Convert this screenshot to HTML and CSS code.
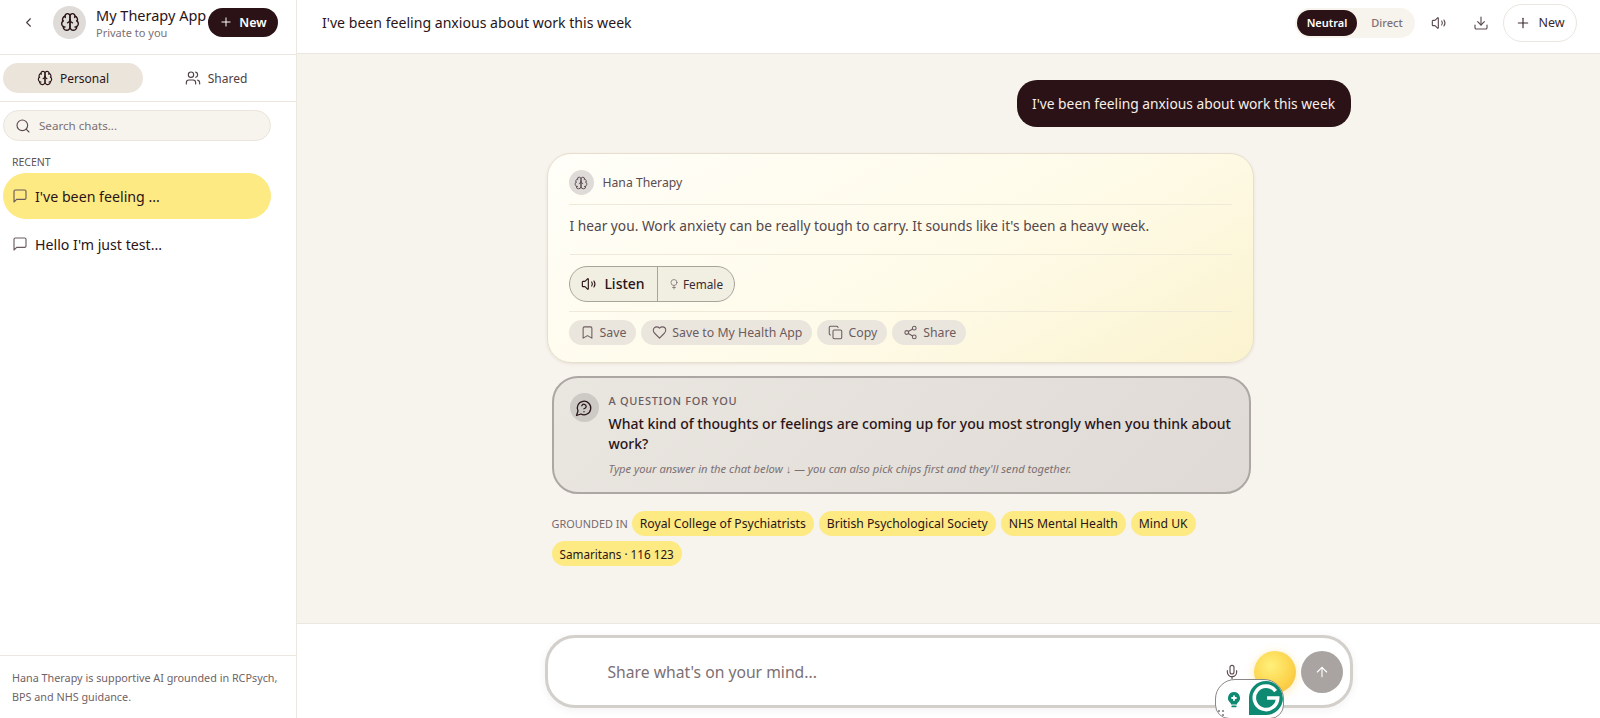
FILE: index.html
```html
<!DOCTYPE html>
<html lang="en">
<head>
<meta charset="utf-8">
<title>My Therapy App</title>
<link rel="stylesheet" href="styles.css">
</head>
<body>
<svg class="defs" aria-hidden="true">
  <symbol id="brain" viewBox="0 0 24 24"><path d="M12 5a3 3 0 1 0-5.997.125 4 4 0 0 0-2.526 5.77 4 4 0 0 0 .556 6.588A4 4 0 1 0 12 18Z"/><path d="M12 5a3 3 0 1 1 5.997.125 4 4 0 0 1 2.526 5.77 4 4 0 0 1-.556 6.588A4 4 0 1 1 12 18Z"/><path d="M15 13a4.5 4.5 0 0 1-3-4 4.5 4.5 0 0 1-3 4"/><path d="M17.599 6.5a3 3 0 0 0 .399-1.375"/><path d="M6.003 5.125A3 3 0 0 0 6.401 6.5"/><path d="M3.477 10.896a4 4 0 0 1 .585-.396"/><path d="M19.938 10.5a4 4 0 0 1 .585.396"/><path d="M6 18a4 4 0 0 1-1.967-.516"/><path d="M19.967 17.484A4 4 0 0 1 18 18"/></symbol>
  <symbol id="vol" viewBox="0 0 24 24"><path d="M11 4.702a.705.705 0 0 0-1.203-.498L6.413 7.587A1.4 1.4 0 0 1 5.416 8H3a1 1 0 0 0-1 1v6a1 1 0 0 0 1 1h2.416a1.4 1.4 0 0 1 .997.413l3.383 3.384A.705.705 0 0 0 11 19.298z"/><path d="M16 9a5 5 0 0 1 0 6"/><path d="M19.4 7.5a8 8 0 0 1 0 9"/></symbol>
  <symbol id="msg" viewBox="0 0 24 24"><path d="M21 15a2 2 0 0 1-2 2H7l-4 4V5a2 2 0 0 1 2-2h14a2 2 0 0 1 2 2z"/></symbol>
  <symbol id="plus" viewBox="0 0 24 24"><path d="M5 12h14"/><path d="M12 5v14"/></symbol>
</svg>
<div class="app">
  <aside class="sidebar">
    <div class="side-head">
      <svg class="ico back" viewBox="0 0 24 24"><path d="m15 18-6-6 6-6"/></svg>
      <span class="avatar"><svg class="ico i20"><use href="#brain"/></svg></span>
      <div class="brand">
        <div class="brand-name">My Therapy App</div>
        <div class="brand-sub">Private to you</div>
      </div>
      <button class="new-dark"><svg class="ico i14"><use href="#plus"/></svg>New</button>
    </div>
    <div class="tabs">
      <div class="tab active"><svg class="ico i16"><use href="#brain"/></svg>Personal</div>
      <div class="tab"><svg class="ico i16" viewBox="0 0 24 24"><path d="M16 21v-2a4 4 0 0 0-4-4H6a4 4 0 0 0-4 4v2"/><path d="M16 3.128a4 4 0 0 1 0 7.744"/><path d="M22 21v-2a4 4 0 0 0-3-3.87"/><circle cx="9" cy="7" r="4"/></svg>Shared</div>
    </div>
    <div class="search">
      <svg class="ico i16" viewBox="0 0 24 24"><path d="m21 21-4.34-4.34"/><circle cx="11" cy="11" r="8"/></svg>
      <span>Search chats...</span>
    </div>
    <div class="recent-label">RECENT</div>
    <div class="chat active"><svg class="ico i16"><use href="#msg"/></svg>I've been feeling ...</div>
    <div class="chat second"><svg class="ico i16"><use href="#msg"/></svg>Hello I'm just test...</div>
    <div class="side-foot">Hana Therapy is supportive AI grounded in RCPsych, BPS and NHS guidance.</div>
  </aside>
  <main class="main">
    <header class="topbar">
      <h1 class="title">I've been feeling anxious about work this week</h1>
      <div class="mode"><span class="mode-on">Neutral</span><span class="mode-off">Direct</span></div>
      <svg class="ico i16 top-ico"><use href="#vol"/></svg>
      <svg class="ico i16 top-ico" viewBox="0 0 24 24"><path d="M12 15V3"/><path d="M21 15v4a2 2 0 0 1-2 2H5a2 2 0 0 1-2-2v-4"/><path d="m7 10 5 5 5-5"/></svg>
      <button class="new-light"><svg class="ico i16"><use href="#plus"/></svg>New</button>
    </header>
    <section class="thread">
      <div class="column">
        <div class="user-row"><div class="user-bubble">I've been feeling anxious about work this week</div></div>
        <article class="card">
          <div class="card-head"><span class="mini-av"><svg class="ico i14"><use href="#brain"/></svg></span>Hana Therapy</div>
          <p class="reply">I hear you. Work anxiety can be really tough to carry. It sounds like it's been a heavy week.</p>
          <div class="voice-row">
            <div class="voice">
              <span class="listen"><svg class="ico i16"><use href="#vol"/></svg>Listen</span>
              <span class="gender"><svg class="ico i12" viewBox="0 0 24 24"><path d="M12 15v7"/><path d="M9 19h6"/><circle cx="12" cy="9" r="6"/></svg>Female</span>
            </div>
          </div>
          <div class="actions">
            <span class="act"><svg class="ico i15" viewBox="0 0 24 24"><path d="m19 21-7-4-7 4V5a2 2 0 0 1 2-2h10a2 2 0 0 1 2 2v16z"/></svg>Save</span>
            <span class="act"><svg class="ico i15" viewBox="0 0 24 24"><path d="M19 14c1.49-1.46 3-3.21 3-5.5A5.5 5.5 0 0 0 16.5 3c-1.76 0-3 .5-4.5 2-1.5-1.5-2.74-2-4.500-2A5.5 5.5 0 0 0 2 8.500c0 2.300 1.500 4.050 3 5.500l7 7Z"/></svg>Save to My Health App</span>
            <span class="act"><svg class="ico i15" viewBox="0 0 24 24"><rect width="14" height="14" x="8" y="8" rx="2"/><path d="M4 16c-1.1 0-2-.9-2-2V4c0-1.1.9-2 2-2h10c1.1 0 2 .9 2 2"/></svg>Copy</span>
            <span class="act"><svg class="ico i15" viewBox="0 0 24 24"><circle cx="18" cy="5" r="3"/><circle cx="6" cy="12" r="3"/><circle cx="18" cy="19" r="3"/><path d="m8.59 13.51 6.83 3.98"/><path d="m15.41 6.51-6.82 3.98"/></svg>Share</span>
          </div>
        </article>
        <article class="question">
          <span class="q-av"><svg class="ico i18" viewBox="0 0 24 24"><path d="M7.9 20A9 9 0 1 0 4 16.1L2 22Z"/><path d="M9.09 9a3 3 0 0 1 5.83 1c0 2-3 3-3 3"/><path d="M12 17h.01"/></svg></span>
          <div class="q-body">
            <div class="q-label">A QUESTION FOR YOU</div>
            <div class="q-text">What kind of thoughts or feelings are coming up for you most strongly when you think about work?</div>
            <div class="q-hint">Type your answer in the chat below ↓ — you can also pick chips first and they'll send together.</div>
          </div>
        </article>
        <div class="sources">
          <span class="src-label">GROUNDED IN</span>
          <span class="chip">Royal College of Psychiatrists</span>
          <span class="chip">British Psychological Society</span>
          <span class="chip">NHS Mental Health</span>
          <span class="chip">Mind UK</span>
          <span class="chip chip-sm">Samaritans · 116 123</span>
        </div>
      </div>
    </section>
    <footer class="composer">
      <div class="inputbox">
        <span class="placeholder">Share what's on your mind...</span>
        <svg class="ico i16 mic" viewBox="0 0 24 24"><path d="M12 19v3"/><path d="M19 10v2a7 7 0 0 1-14 0v-2"/><rect x="9" y="2" width="6" height="13" rx="3"/></svg>
        <span class="orb"></span>
        <span class="send"><svg class="ico i16" viewBox="0 0 24 24"><path d="m5 12 7-7 7 7"/><path d="M12 19V5"/></svg></span>
        <div class="gram">
          <span class="gram-grip"></span>
          <svg class="gram-bulb" viewBox="0 0 24 24"><path d="M12 2a8 8 0 0 0-5 14.2c.8.7 1 1.3 1 2.3h8c0-1 .2-1.6 1-2.3A8 8 0 0 0 12 2z"/><rect x="8.500" y="20" width="7" height="2.400" rx="1.200"/><path class="gram-plus" d="M12 6.500v7M8.500 10h7"/></svg>
          <span class="gram-g"><svg viewBox="0 0 32 32"><path d="M25 9.500A11 11 0 1 0 27 16H17"/></svg></span>
        </div>
      </div>
    </footer>
  </main>
</div>
</body>
</html>
```
FILE: styles.css
```css
* { box-sizing: border-box; }
html, body { margin: 0; height: 100%; }
body {
  font-family: "Noto Sans", "Open Sans", sans-serif;
  color: #2a1418;
  background: #fff;
  overflow: hidden;
}
.defs { display: none; }
.ico { fill: none; stroke: currentColor; stroke-width: 1.7; stroke-linecap: round; stroke-linejoin: round; flex: none; }
.i12 { width: 12px; height: 12px; }
.i14 { width: 14px; height: 14px; }
.i15 { width: 15px; height: 15px; }
.i16 { width: 16px; height: 16px; }
.i18 { width: 18px; height: 18px; }
.i20 { width: 20px; height: 20px; }
.app { display: flex; height: 718px; }

/* sidebar */
.sidebar { width: 297px; flex: none; display: flex; flex-direction: column; border-right: 1px solid #ece7e0; background: #fff; }
.side-head { height: 55px; flex: none; display: flex; align-items: center; padding: 0 0 10px 21px; border-bottom: 1px solid #ece6de; }
.back { width: 15px; height: 15px; color: #4a3a3c; margin-right: 17px; }
.avatar { width: 33px; height: 33px; border-radius: 50%; background: #dedbd9; display: flex; align-items: center; justify-content: center; margin-right: 10px; flex: none; }
.brand { width: 112px; flex: none; white-space: nowrap; }
.brand-name { font-size: 14.500px; line-height: 20px; color: #2a1418; }
.brand-sub { font-size: 11px; line-height: 15px; color: #7c7073; }
.new-dark { width: 70px; height: 29px; border: 0; border-radius: 15px; background: #2a1216; color: #fff; font: 600 12.500px "Noto Sans", sans-serif; display: flex; align-items: center; justify-content: center; gap: 6px; padding: 0; flex: none; }
.tabs { height: 47px; flex: none; display: flex; padding: 8px 3px 0; gap: 3px; border-bottom: 1px solid #ece6de; }
.tab { width: 140px; height: 30px; border-radius: 15px; display: flex; align-items: center; justify-content: center; gap: 7px; font-size: 12px; color: #4e4043; }
.tab.active { background: #ebe4db; color: #2a1418; }
.search { height: 31px; width: 268px; margin: 8px 0 0 3px; border: 1px solid #ebe4dc; border-radius: 16px; background: #f7f3ed; display: flex; align-items: center; gap: 8px; padding-left: 11px; font-size: 11.600px; color: #7c7073; flex: none; }
.search .ico { color: #5b4b4e; }
.recent-label { font-size: 10.500px; line-height: 14px; color: #5f5255; margin: 14px 0 0 12px; }
.chat { width: 268px; height: 46px; margin-left: 3px; border-radius: 23px; display: flex; align-items: center; gap: 7px; padding-left: 9px; font-size: 14.200px; color: #2a1418; flex: none; }
.chat .ico { color: #6a5b5e; }
.chat.active { background: #fdea83; margin-top: 4px; }
.chat.second { margin-top: 2px; }
.side-foot { margin-top: auto; border-top: 1px solid #ece7e0; height: 63px; padding: 12px 12px 0; font-size: 10.800px; line-height: 19px; color: #6f6366; }

/* main */
.main { flex: 1; min-width: 0; display: flex; flex-direction: column; background: #f7f3ed; }
.topbar { height: 54px; flex: none; background: #fff; border-bottom: 1px solid #ebe6df; display: flex; align-items: center; padding: 0 23px 8px 25px; }
.title { flex: 1; margin: 0; font-size: 14.100px; font-weight: 400; color: #2a1418; }
.mode { display: flex; height: 30px; width: 120px; padding: 2px; border-radius: 15px; background: #f7f3ed; font-size: 11px; align-items: center; }
.mode-on { width: 60px; height: 26px; border-radius: 13px; background: #2a1216; color: #fff; font-weight: 600; display: flex; align-items: center; justify-content: center; }
.mode-off { flex: 1; text-align: center; color: #7c7073; font-weight: 500; padding-left: 4px; }
.top-ico { color: #5b4b4e; margin-left: 16px; margin-right: 10px; }
.new-light { width: 74px; height: 38px; border: 1px solid #ebe6df; border-radius: 19px; background: #fff; color: #3a2a2d; font: 400 12.500px "Noto Sans", sans-serif; display: flex; align-items: center; justify-content: center; gap: 7px; padding: 0; margin-left: 4px; }
.thread { flex: 1; min-height: 0; padding-top: 26px; }
.column { width: 806px; margin: 0 auto; }
.user-row { display: flex; justify-content: flex-end; padding-right: 1px; }
.user-bubble { height: 47px; width: 334px; border-radius: 20px; background: #2a1216; color: #f8efe8; font-size: 13.800px; display: flex; align-items: center; justify-content: center; }
.card { width: 707px; height: 210px; margin: 26px 0 0 1px; padding: 16px 21px 0; border: 1px solid #e6dfcd; border-radius: 24px; background: linear-gradient(150deg, #fffef8 0%, #fefbe9 55%, #fbf3cf 100%); box-shadow: 0 1px 3px rgba(120, 100, 60, .12); }
.card-head { display: flex; align-items: center; gap: 9px; font-size: 12.200px; color: #5a4c4f; border-bottom: 1px solid #eee9d8; padding-bottom: 9px; height: 35px; }
.mini-av { width: 25px; height: 25px; border-radius: 50%; background: #dedbd9; display: flex; align-items: center; justify-content: center; }
.reply { margin: 0 0 0 1px; height: 50px; font-size: 13.730px; line-height: 42px; color: #54464a; border-bottom: 1px solid #eee9d8; }
.voice-row { height: 57px; display: flex; align-items: center; border-bottom: 1px solid #eee9d8; padding-top: 1px; }
.voice { display: flex; height: 36px; border: 1px solid #a8a49a; border-radius: 18px; background: #f1eee2; }
.listen { width: 88px; display: flex; align-items: center; justify-content: center; gap: 7px; font-size: 14px; color: #2a1418; border-right: 1px solid #a8a49a; font-weight: 500; }
.gender { width: 76px; display: flex; align-items: center; justify-content: center; gap: 3px; font-size: 11.800px; color: #3a2a2d; }
.gender .ico { stroke-width: 1.3; color: #6b5c5f; }
.actions { display: flex; gap: 5px; padding-top: 8px; }
.act { height: 25px; padding: 0 10px 0 11px; border-radius: 13px; background: #ebe6dd; display: flex; align-items: center; gap: 5px; font-size: 12.300px; color: #6b5c5f; }
.question { width: 699px; height: 118px; margin: 13px 0 0 6px; padding: 15px 16px; border: 2px solid #aca7a3; border-radius: 26px; background: linear-gradient(135deg, #eae6e0, #dfdad5); display: flex; gap: 10px; }
.q-av { width: 29px; height: 29px; border-radius: 50%; background: #cdc9c5; display: flex; align-items: center; justify-content: center; flex: none; }
.q-label { font-size: 11px; line-height: 16px; letter-spacing: .7px; color: #6b5c5f; font-weight: 500; }
.q-text { font-size: 14px; line-height: 19.500px; font-weight: 500; color: #2a1418; margin-top: 5px; }
.q-hint { font-size: 11.200px; line-height: 16px; font-style: italic; color: #7c7073; margin-top: 8px; }
.sources { width: 707px; margin: 17px 0 0 6px; display: flex; flex-wrap: wrap; align-items: center; gap: 5px; }
.src-label { font-size: 10.900px; color: #756a6c; margin-right: -1px; }
.chip { height: 25px; padding: 0 8px; border-radius: 13px; background: #fdea83; font-size: 12.200px; display: flex; align-items: center; color: #2a1418; }
.chip-sm { font-size: 11.700px; }

/* composer */
.composer { height: 95px; flex: none; background: #fff; border-top: 1px solid #ece7e0; padding-top: 11px; }
.inputbox { position: relative; width: 808px; height: 73px; margin: 0 auto; border: 3px solid #d3cfca; border-radius: 30px; background: #fff; display: flex; align-items: center; padding: 0 7px 0 60px; box-shadow: 0 2px 10px rgba(60, 40, 30, .06); }
.placeholder { flex: 1; font-size: 15.700px; color: #7c7073; }
.mic { color: #5b4b4e; margin-right: 14px; }
.orb { width: 42px; height: 42px; border-radius: 50%; background: radial-gradient(circle at 40% 35%, #fff07a, #fcd24a 60%, #f2b63a); box-shadow: 0 2px 10px rgba(250, 200, 60, .4); margin-right: 5px; }
.send { width: 42px; height: 42px; border-radius: 50%; background: #a9a3a2; color: #fff; display: flex; align-items: center; justify-content: center; }
.gram { position: absolute; left: 667px; top: 41px; width: 69px; height: 40px; border: 1.500px solid #8a8785; border-radius: 20px 20px 14px 14px; background: #fff; display: flex; align-items: flex-start; padding: 9px 0 0 9px; overflow: hidden; }
.gram-grip { position: absolute; left: 1px; bottom: 1px; width: 8px; height: 8px; background: radial-gradient(circle, #9a9896 1px, transparent 1.200px) 0 0 / 4px 4px; }
.gram-bulb { width: 18px; height: 21px; fill: #0f8a72; stroke: none; flex: none; }
.gram-plus { fill: none; stroke: #fff; stroke-width: 2.400; }
.gram-g { position: absolute; right: 0; top: 1px; width: 34px; height: 34px; background: #0f8a72; border-radius: 50% 50% 50% 0; }
.gram-g svg { display: block; width: 34px; height: 34px; fill: none; stroke: #fff; stroke-width: 3.400; }
```
